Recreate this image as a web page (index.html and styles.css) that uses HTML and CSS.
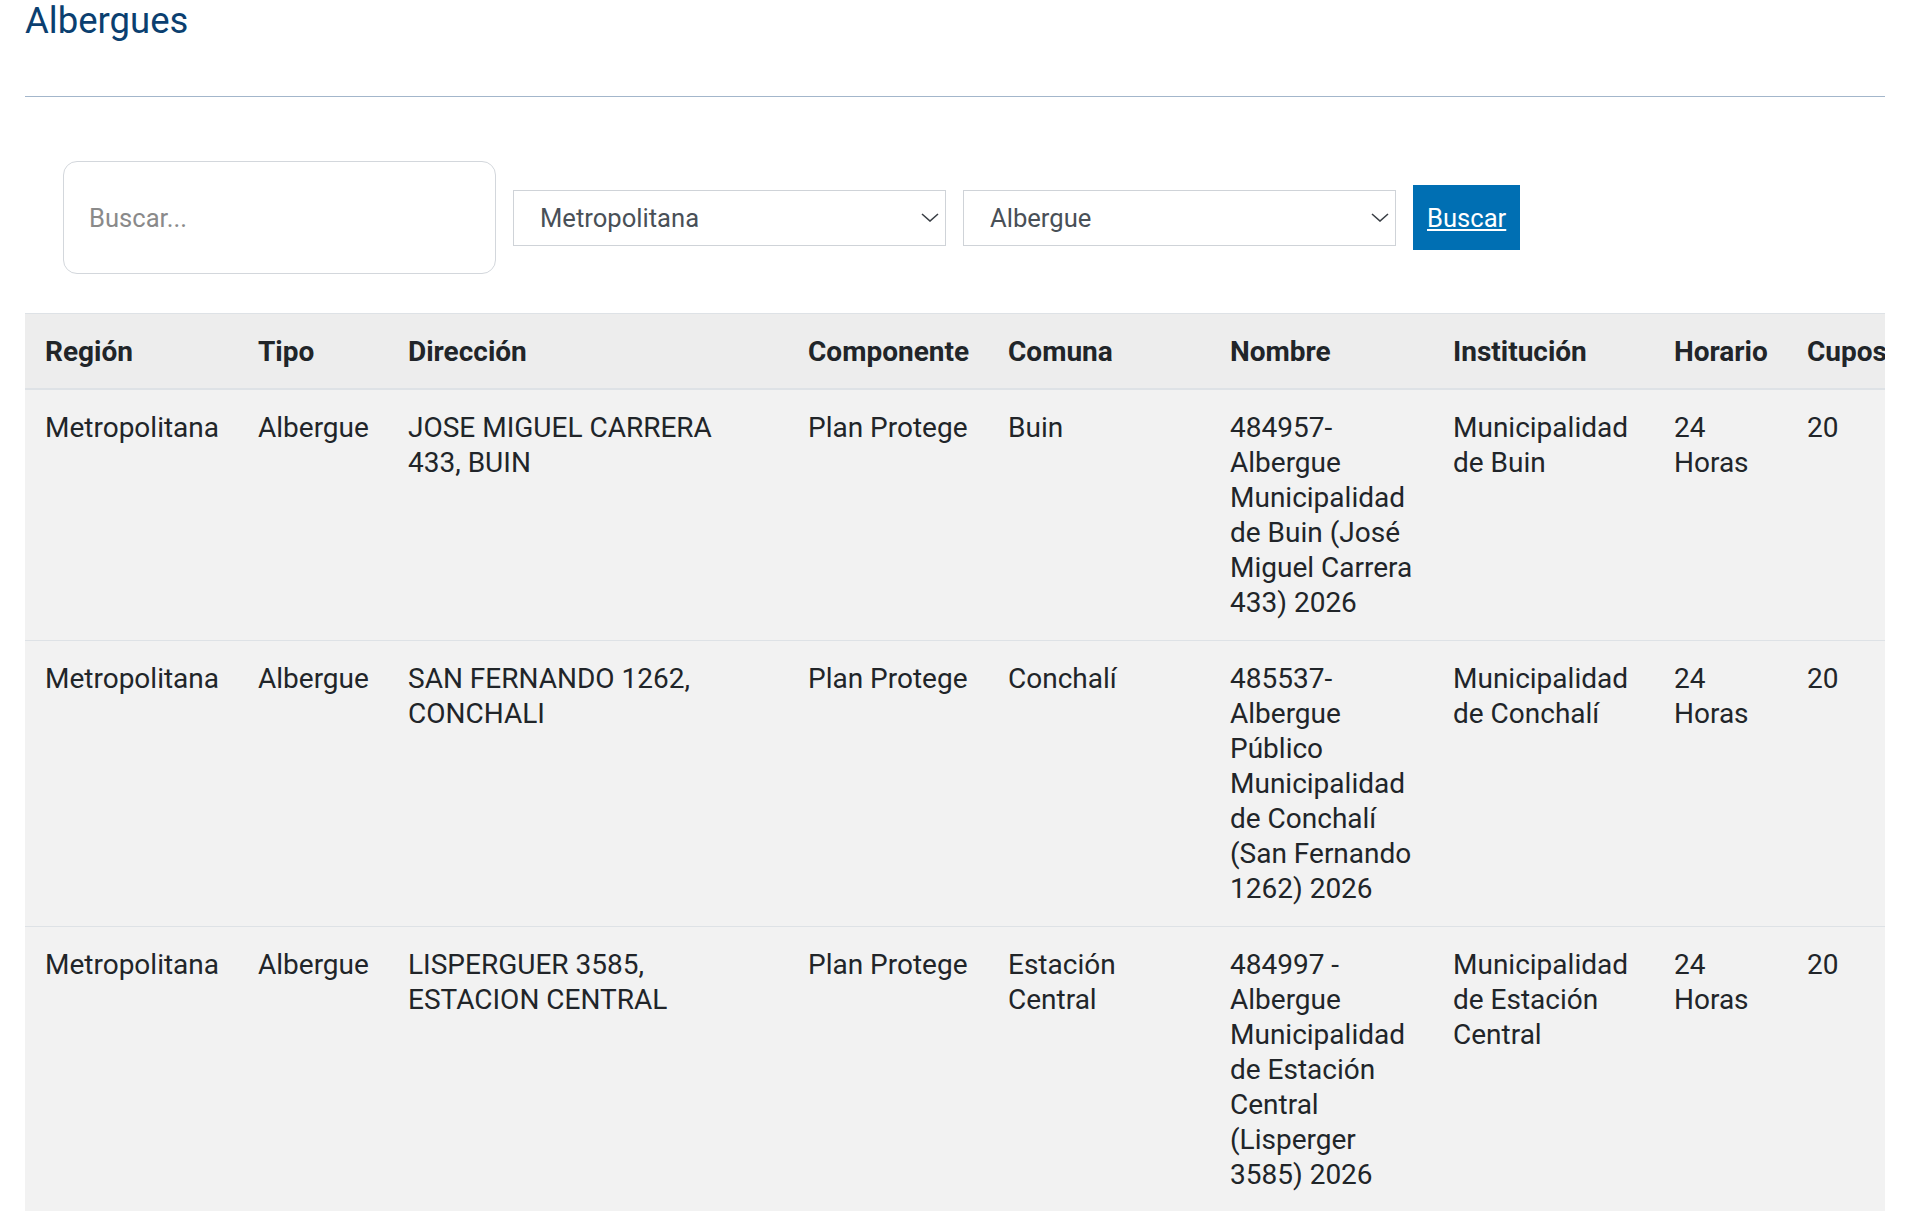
FILE: index.html
```html
<!DOCTYPE html>
<html lang="es">
<head>
    <meta charset="UTF-8">
    <meta name="viewport" content="width=device-width, initial-scale=1.0">
    <link rel="stylesheet" href="styles.css">
    <title>Albergues</title>
</head>
<body>
    <div class="container">
        <h1 class="page-title">Albergues</h1>

        <form class="search-form" onsubmit="return false">
            <input type="text" class="search-input" placeholder="Buscar...">

            <div class="select-wrap">
                <select class="filter-select">
                    <option>Metropolitana</option>
                </select>
                <svg class="select-arrow" viewBox="0 0 18 9"><polyline points="1,1 9,8 17,1"/></svg>
            </div>

            <div class="select-wrap">
                <select class="filter-select">
                    <option>Albergue</option>
                </select>
                <svg class="select-arrow" viewBox="0 0 18 9"><polyline points="1,1 9,8 17,1"/></svg>
            </div>

            <button type="submit" class="search-button">Buscar</button>
        </form>

        <div class="table-wrap">
            <table class="results">
                <colgroup>
                    <col class="col-region">
                    <col class="col-tipo">
                    <col class="col-direccion">
                    <col class="col-componente">
                    <col class="col-comuna">
                    <col class="col-nombre">
                    <col class="col-institucion">
                    <col class="col-horario">
                    <col class="col-cupos">
                </colgroup>
                <thead>
                    <tr>
                        <th>Región</th>
                        <th>Tipo</th>
                        <th>Dirección</th>
                        <th>Componente</th>
                        <th>Comuna</th>
                        <th>Nombre</th>
                        <th>Institución</th>
                        <th>Horario</th>
                        <th>Cupos</th>
                    </tr>
                </thead>
                <tbody>
                    <tr>
                        <td>Metropolitana</td>
                        <td>Albergue</td>
                        <td>JOSE MIGUEL CARRERA 433, BUIN</td>
                        <td>Plan Protege</td>
                        <td>Buin</td>
                        <td>484957-Albergue Municipalidad de Buin (José Miguel Carrera 433) 2026</td>
                        <td>Municipalidad de Buin</td>
                        <td>24 Horas</td>
                        <td>20</td>
                    </tr>
                    <tr>
                        <td>Metropolitana</td>
                        <td>Albergue</td>
                        <td>SAN FERNANDO 1262, CONCHALI</td>
                        <td>Plan Protege</td>
                        <td>Conchalí</td>
                        <td>485537-Albergue Público Municipalidad de Conchalí (San Fernando 1262) 2026</td>
                        <td>Municipalidad de Conchalí</td>
                        <td>24 Horas</td>
                        <td>20</td>
                    </tr>
                    <tr>
                        <td>Metropolitana</td>
                        <td>Albergue</td>
                        <td>LISPERGUER 3585, ESTACION CENTRAL</td>
                        <td>Plan Protege</td>
                        <td>Estación Central</td>
                        <td>484997 - Albergue Municipalidad de Estación Central (Lisperger 3585) 2026</td>
                        <td>Municipalidad de Estación Central</td>
                        <td>24 Horas</td>
                        <td>20</td>
                    </tr>
                </tbody>
            </table>
        </div>
    </div>
</body>
</html>
```

FILE: styles.css
```css
body {
    margin: 0;
    font-family: Roboto, "Liberation Sans", sans-serif;
    color: #212529;
    background-color: #fff;
}

.container {
    width: 1860px;
    margin-left: 25px;
}

.page-title {
    margin: 0;
    padding-top: 1px;
    height: 95px;
    font-size: 36.5px;
    line-height: 40px;
    font-weight: 400;
    color: #0b3f70;
    border-bottom: 1px solid #a3b6cb;
}

.search-form {
    display: flex;
    align-items: center;
    gap: 17px;
    margin-top: 64px;
    padding-left: 38px;
}

.search-input {
    box-sizing: border-box;
    width: 433px;
    height: 113px;
    padding: 0 25px;
    border: 1px solid #d3d7dc;
    border-radius: 14px;
    font-family: inherit;
    font-size: 25.6px;
    color: #495057;
    outline: none;
}

.search-input::placeholder {
    color: #8a8a8a;
}

.select-wrap {
    position: relative;
    width: 433px;
}

.filter-select {
    box-sizing: border-box;
    width: 100%;
    height: 56px;
    padding: 0 40px 0 26px;
    border: 1px solid #cfd3d8;
    border-radius: 0;
    background-color: #fff;
    appearance: none;
    -webkit-appearance: none;
    font-family: inherit;
    font-size: 25.6px;
    color: #495057;
}

.select-arrow {
    position: absolute;
    right: 7px;
    top: 23px;
    width: 18px;
    height: 9px;
    fill: none;
    stroke: #3a3f45;
    stroke-width: 1.6;
    pointer-events: none;
}

.search-button {
    height: 65px;
    padding: 0 14px;
    border: none;
    background-color: #006fb3;
    color: white;
    font-family: inherit;
    font-size: 25.6px;
    text-decoration: underline;
    cursor: pointer;
}

.table-wrap {
    margin-top: 39px;
    overflow: hidden;
}

.results {
    width: 1892px;
    table-layout: fixed;
    border-collapse: collapse;
    font-size: 28px;
    line-height: 35px;
}

.col-region { width: 213px; }
.col-tipo { width: 150px; }
.col-direccion { width: 400px; }
.col-componente { width: 200px; }
.col-comuna { width: 222px; }
.col-nombre { width: 223px; }
.col-institucion { width: 221px; }
.col-horario { width: 133px; }
.col-cupos { width: 130px; }

.results th,
.results td {
    padding: 20px;
    text-align: left;
    vertical-align: top;
}

.results th {
    padding-bottom: 19px;
    background-color: #ededed;
    font-weight: 700;
    white-space: nowrap;
    border-top: 1px solid #dee2e6;
    border-bottom: 2px solid #dee2e6;
}

.results td {
    background-color: #f2f2f2;
    border-top: 1px solid #dee2e6;
}
```
